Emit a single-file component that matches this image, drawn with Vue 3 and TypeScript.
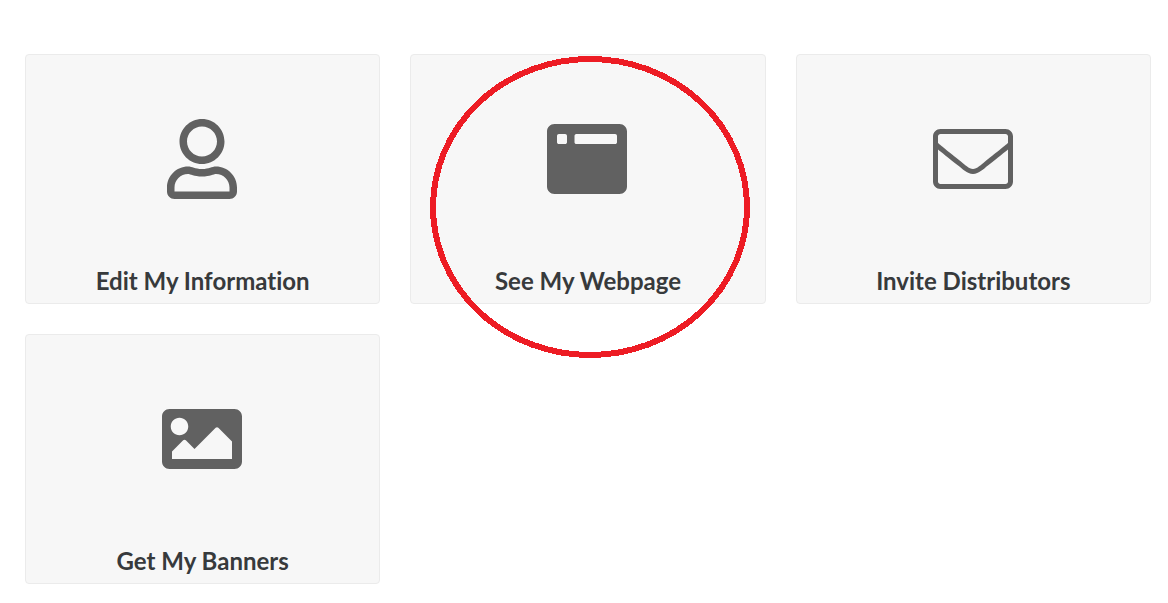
<script setup lang="ts">
interface Tile {
  id: string
  label: string
  viewBox: string
  path: string
  circled?: boolean
}

const tiles: Tile[] = [
  {
    id: 'information',
    label: 'Edit My Information',
    viewBox: '-32 0 512 512',
    path: 'M313.6 304c-28.7 0-42.5 16-89.6 16-47.1 0-60.8-16-89.6-16C60.2 304 0 364.2 0 438.4V464c0 26.5 21.5 48 48 48h352c26.5 0 48-21.5 48-48v-25.6c0-74.2-60.2-134.4-134.4-134.4zM400 464H48v-25.6c0-47.6 38.8-86.4 86.4-86.4 14.6 0 38.3 16 89.6 16 51.7 0 74.9-16 89.6-16 47.6 0 86.4 38.8 86.4 86.4V464zM224 288c79.5 0 144-64.5 144-144S303.5 0 224 0 80 64.5 80 144s64.5 144 144 144zm0-240c52.9 0 96 43.1 96 96s-43.1 96-96 96-96-43.1-96-96 43.1-96 96-96z',
  },
  {
    id: 'webpage',
    label: 'See My Webpage',
    viewBox: '0 0 512 512',
    path: 'M48 32h416c26.5 0 48 21.5 48 48v352c0 26.5-21.5 48-48 48H48c-26.5 0-48-21.5-48-48V80c0-26.5 21.5-48 48-48zM76 96c-6.6 0-12 5.4-12 12v40c0 6.6 5.4 12 12 12h40c6.6 0 12-5.4 12-12v-40c0-6.6-5.4-12-12-12zM188 96c-6.6 0-12 5.4-12 12v40c0 6.6 5.4 12 12 12h248c6.6 0 12-5.4 12-12v-40c0-6.6-5.4-12-12-12z',
    circled: true,
  },
  {
    id: 'invite',
    label: 'Invite Distributors',
    viewBox: '0 0 512 512',
    path: 'M464 64H48C21.5 64 0 85.5 0 112v288c0 26.5 21.5 48 48 48h416c26.5 0 48-21.5 48-48V112c0-26.5-21.5-48-48-48zM48 96h416c8.8 0 16 7.2 16 16v41.4c-21.9 18.5-53.2 44-150.6 121.3-16.9 13.4-50.2 45.7-73.4 45.3-23.2.4-56.6-31.9-73.4-45.3C85.2 197.4 53.9 171.9 32 153.4V112c0-8.8 7.2-16 16-16zm416 320H48c-8.8 0-16-7.2-16-16V195c22.8 18.7 58.8 47.6 130.7 104.7 20.5 16.4 56.7 52.5 93.3 52.3 36.4.3 72.3-35.5 93.3-52.3 71.9-57.1 107.9-86 130.7-104.7v205c0 8.8-7.2 16-16 16z',
  },
  {
    id: 'banners',
    label: 'Get My Banners',
    viewBox: '0 0 512 512',
    path: 'M464 448H48c-26.5 0-48-21.5-48-48V112c0-26.5 21.5-48 48-48h416c26.5 0 48 21.5 48 48v288c0 26.5-21.5 48-48 48zM112 120c-30.9 0-56 25.1-56 56s25.1 56 56 56 56-25.1 56-56-25.1-56-56-56zM64 384h384V272l-87.5-87.5c-4.7-4.7-12.3-4.7-17 0L208 320l-55.5-55.5c-4.7-4.7-12.3-4.7-17 0L64 336v48z',
  },
]
</script>

<template>
  <main class="tiles">
    <a v-for="tile in tiles" :key="tile.id" class="tile" :href="'#' + tile.id">
      <span class="picture">
        <svg class="icon" :viewBox="tile.viewBox" aria-hidden="true">
          <path :d="tile.path" fill-rule="evenodd" />
        </svg>
      </span>
      <span class="label">{{ tile.label }}</span>
      <svg v-if="tile.circled" class="ring" viewBox="0 0 320 302" aria-hidden="true">
        <ellipse cx="160" cy="151" rx="157" ry="148" />
      </svg>
    </a>
  </main>
</template>

<style>
body {
  margin: 0;
  background: #fff;
}
</style>

<style scoped>
.tiles {
  display: grid;
  grid-template-columns: repeat(3, 1fr);
  gap: 30px;
  padding: 54px 17px 19px 25px;
  font-family: Lato, "Open Sans", sans-serif;
}

.tile {
  position: relative;
  display: flex;
  flex-direction: column;
  box-sizing: border-box;
  min-height: 250px;
  border: 1px solid #ebebeb;
  border-radius: 4px;
  background: #f7f7f7;
  color: #373a3c;
  text-align: center;
  text-decoration: none;
}

.picture {
  display: flex;
  align-items: center;
  justify-content: center;
  height: 208px;
  padding-right: 1px;
}

.icon {
  width: 80px;
  height: 80px;
  fill: #616161;
}

.label {
  font-size: 24px;
  font-weight: 700;
  font-variant-ligatures: none;
  line-height: 36px;
}

.ring {
  position: absolute;
  z-index: 1;
  top: 1px;
  left: 50%;
  width: 320px;
  height: 302px;
  margin-left: -158px;
  fill: none;
  stroke: #ed1c24;
  stroke-width: 6px;
  shape-rendering: crispEdges;
  pointer-events: none;
}
</style>
